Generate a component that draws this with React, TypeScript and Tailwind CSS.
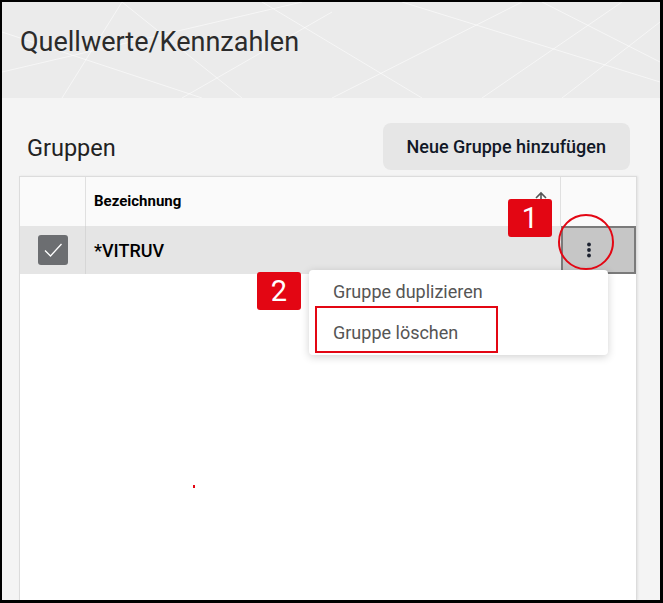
const HeaderPattern = () => (
  <svg className="absolute inset-0 h-full w-full" viewBox="0 0 658 96" preserveAspectRatio="none">
    <g stroke="#ffffff" strokeOpacity="0.55" strokeWidth="1" fill="none">
      <line x1="0" y1="70" x2="300" y2="0" />
      <line x1="60" y1="96" x2="120" y2="0" />
      <line x1="180" y1="96" x2="330" y2="10" />
      <line x1="260" y1="0" x2="420" y2="96" />
      <line x1="330" y1="96" x2="520" y2="0" />
      <line x1="400" y1="0" x2="658" y2="80" />
      <line x1="480" y1="96" x2="620" y2="0" />
      <line x1="540" y1="0" x2="658" y2="60" />
      <line x1="560" y1="96" x2="658" y2="20" />
      <line x1="0" y1="30" x2="200" y2="96" />
      <line x1="120" y1="0" x2="240" y2="96" />
    </g>
  </svg>
);

const Badge = ({ n, className }: { n: string; className: string }) => (
  <div
    className={`absolute flex h-[38px] w-[44px] items-center justify-center rounded-[3px] bg-[#e30613] text-[29px] leading-none text-white ${className}`}
  >
    {n}
  </div>
);

export default function App() {
  return (
    <div className="relative h-[603px] w-[663px] overflow-hidden bg-black font-['Roboto',sans-serif]">
      <div className="ml-[2px] mt-[2px] flex h-[598px] w-[658px] flex-col bg-[#f4f4f4]">
        {/* Page header */}
        <div className="relative h-[96px] shrink-0 overflow-hidden bg-[#ebebeb]">
          <HeaderPattern />
          <h1 className="relative pl-[18px] pt-[24px] text-[27px] font-normal leading-[32px] text-[#2b2b2b]">
            Quellwerte/Kennzahlen
          </h1>
        </div>

        {/* Gruppen */}
        <div className="flex min-h-0 flex-1 flex-col pl-[17px] pr-[23px]">
          <div className="flex items-center justify-between pt-[25px] pb-[6px]">
            <h2 className="pl-[8px] pt-[4px] text-[23.5px] font-normal text-[#222]">Gruppen</h2>
            <button className="mr-[7px] h-[47px] rounded-[8px] bg-[#e6e6e6] px-[24px] text-[18px] font-medium text-[#111827]">
              Neue Gruppe hinzufügen
            </button>
          </div>

          <div className="flex flex-1 flex-col border-x border-t border-[#dcdcdc] bg-white shadow-[1px_0_2px_rgba(0,0,0,0.08)]">
            {/* Table head */}
            <div className="flex h-[49px] bg-[#fafafa]">
              <div className="w-[66px] border-r border-[#e0e0e0]" />
              <div className="relative flex flex-1 items-center border-r border-[#e0e0e0] pl-[8px] text-[15px] font-bold text-black">
                Bezeichnung
                <svg className="absolute right-[12px] top-[14px]" width="14" height="14" viewBox="0 0 14 14" fill="none" stroke="#555" strokeWidth="1.6">
                  <path d="M7 13V2M2 7l5-5 5 5" />
                </svg>
              </div>
              <div className="w-[75px]" />
            </div>

            {/* Row */}
            <div className="flex h-[48px] bg-[#e5e5e5]">
              <div className="flex w-[66px] items-center justify-center border-r border-[#d6d6d6]">
                <div className="flex h-[30px] w-[30px] items-center justify-center rounded-[3px] bg-[#6c6e71]">
                  <svg width="20" height="16" viewBox="0 0 20 16" fill="none" stroke="#fff" strokeWidth="1.3">
                    <path d="M2 8.5l5.5 5.5L18.5 2" />
                  </svg>
                </div>
              </div>
              <div className="flex flex-1 items-center pl-[8px] text-[18px] font-medium text-black">*VITRUV</div>
              <div className="flex w-[75px] items-center border-2 border-[#7a7a7a] bg-[#c6c6c6] pl-[23px]">
                <svg width="6" height="16" viewBox="0 0 6 16" fill="#1c2230">
                  <circle cx="3" cy="2.5" r="1.9" />
                  <circle cx="3" cy="8" r="1.9" />
                  <circle cx="3" cy="13.5" r="1.9" />
                </svg>
              </div>
            </div>
            <div className="flex-1" />
          </div>
        </div>
      </div>

      {/* Overlays: context menu and annotations */}
      <div className="absolute left-[309px] top-[270px] flex w-[299px] flex-col rounded-[4px] bg-white pt-[4px] pb-[1px] shadow-[0_2px_8px_rgba(0,0,0,0.18)]">
        <div className="h-[40px] pl-[24px] pt-[4px] text-[18px] text-[#555]">Gruppe duplizieren</div>
        <div className="h-[40px] pl-[24px] pt-[5px] text-[18px] text-[#555]">Gruppe löschen</div>
      </div>
      <div className="absolute left-[315px] top-[306px] h-[47px] w-[183px] border-2 border-[#e30613]" />
      <div className="absolute left-[558px] top-[214px] h-[56px] w-[56px] rounded-full border-2 border-[#e30613]" />
      <Badge n="1" className="left-[508px] top-[199px]" />
      <Badge n="2" className="left-[257px] top-[272px]" />
      <div className="absolute left-[193px] top-[485px] h-[3px] w-[2px] bg-[#e30613]" />
    </div>
  );
}
